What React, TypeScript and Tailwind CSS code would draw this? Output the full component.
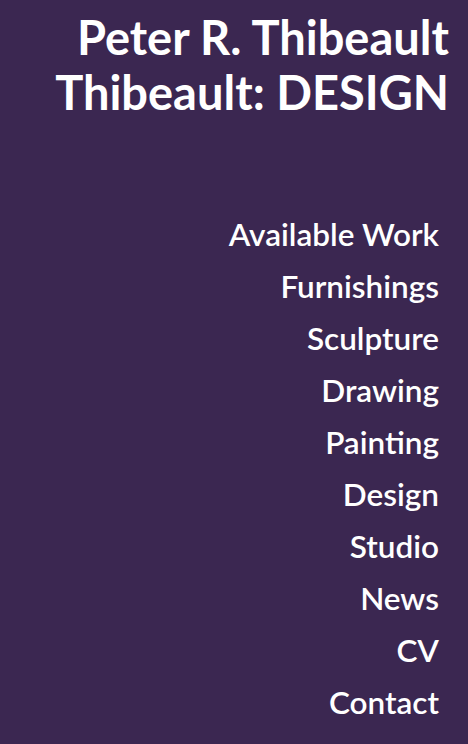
const links = [
  "Available Work",
  "Furnishings",
  "Sculpture",
  "Drawing",
  "Painting",
  "Design",
  "Studio",
  "News",
  "CV",
  "Contact",
];

export default function App() {
  return (
    <div className="min-h-[744px] bg-[#3b2751] text-white font-['Lato','Liberation_Sans',sans-serif]">
      <header className="pt-[10px] pr-[19px] text-right">
        <h1 className="text-[47px] font-bold leading-[55px]">
          Peter R. Thibeault
          <br />
          Thibeault: DESIGN
        </h1>
      </header>
      <nav className="mt-[88px] pr-[29px]">
        <ul className="flex flex-col items-end">
          {links.map((label) => (
            <li key={label} className="text-[31.5px] font-semibold leading-[52px]">
              <a href="#">{label}</a>
            </li>
          ))}
        </ul>
      </nav>
    </div>
  );
}
